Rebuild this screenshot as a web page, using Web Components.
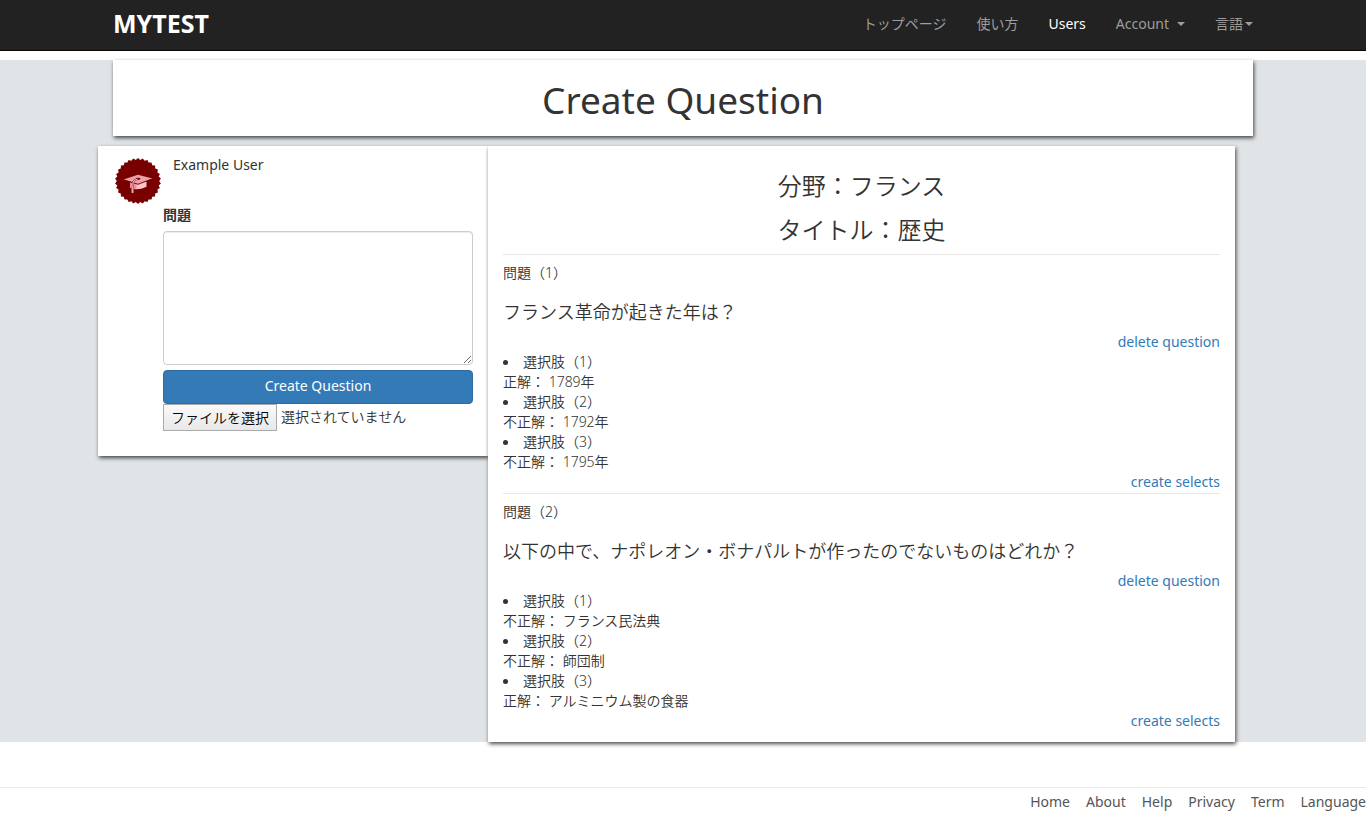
<!DOCTYPE html>
<html lang="ja">
<head>
<meta charset="utf-8">
<meta name="viewport" content="width=device-width, initial-scale=1">
<title>Create Question | MYTEST</title>
<style>
  body {
    margin: 0;
    background: #fff;
    color: #333;
    font: 350 14px/20px "Noto Sans", "Noto Sans CJK JP", sans-serif;
    --link: #337ab7;
    --rule: #e7e7e7;
    --shadow: 1px 2px 4px rgba(0, 0, 0, .7);
    --container: 1140px;
  }
</style>
</head>
<body>
<site-header>
  <nav-link href="#">トップページ</nav-link>
  <nav-link href="#">使い方</nav-link>
  <nav-link href="#" active>Users</nav-link>
  <nav-link href="#" caret="spaced">Account</nav-link>
  <nav-link href="#" caret>言語</nav-link>
</site-header>
<page-main>
  <page-title slot="title">Create Question</page-title>
  <question-form slot="side" user="Example User"></question-form>
  <question-panel category="フランス" heading="歴史">
    <question-item number="1" text="フランス革命が起きた年は？">
      <choice-item number="1" correct>1789年</choice-item>
      <choice-item number="2">1792年</choice-item>
      <choice-item number="3">1795年</choice-item>
    </question-item>
    <question-item number="2" text="以下の中で、ナポレオン・ボナパルトが作ったのでないものはどれか？">
      <choice-item number="1">フランス民法典</choice-item>
      <choice-item number="2">師団制</choice-item>
      <choice-item number="3" correct>アルミニウム製の食器</choice-item>
    </question-item>
  </question-panel>
</page-main>
<site-footer></site-footer>

<script>
class BaseElement extends HTMLElement {
  connectedCallback() {
    if (this.shadowRoot) return;
    this.attachShadow({ mode: "open" }).innerHTML = this.render();
  }
  attr(name) { return this.getAttribute(name) || ""; }
}

customElements.define("site-header", class extends BaseElement {
  render() {
    return `<style>
      :host { display: block; background: #222; border-bottom: 1px solid #080808; }
      .bar { max-width: var(--container); min-height: 50px; margin: 0 auto; padding: 0 15px; display: flex; justify-content: space-between; }
      .brand { color: #fff; font-size: 25px; line-height: 46px; font-weight: 700; text-decoration: none; }
      nav { display: flex; margin-right: -15px; }
    </style>
    <header class="bar"><a class="brand" href="#">MYTEST</a><nav><slot></slot></nav></header>`;
  }
});

customElements.define("nav-link", class extends BaseElement {
  render() {
    const caret = this.hasAttribute("caret") ? `<span class="caret ${this.attr("caret")}"></span>` : "";
    return `<style>
      :host { display: block; font-weight: 400; }
      a { display: flex; align-items: center; padding: 14px 15px 16px; color: #9d9d9d; text-decoration: none; white-space: nowrap; }
      :host([active]) a { color: #fff; }
      .caret { margin-left: 2px; border-top: 4px solid; border-left: 4px solid transparent; border-right: 4px solid transparent; }
      .spaced { margin-left: 8px; }
    </style>
    <a href="${this.attr("href")}"><slot></slot>${caret}</a>`;
  }
});

customElements.define("page-main", class extends BaseElement {
  render() {
    return `<style>
      :host { display: block; margin-top: 9px; background: #e0e4e7; }
      main { max-width: var(--container); margin: 0 auto; padding: 0 15px; }
      .row { display: grid; grid-template-columns: 390px minmax(0, 1fr); align-items: start; margin: 10px 18px 0 -15px; }
    </style>
    <main>
      <slot name="title"></slot>
      <div class="row"><slot name="side"></slot><slot></slot></div>
    </main>`;
  }
});

customElements.define("page-title", class extends BaseElement {
  render() {
    return `<style>
      :host { display: block; background: #fff; box-shadow: var(--shadow); }
      h1 { margin: 0; padding: 20px 0 16px; font-size: 37px; line-height: 40px; font-weight: 400; text-align: center; }
    </style><h1><slot></slot></h1>`;
  }
});

customElements.define("user-badge", class extends BaseElement {
  render() {
    const teeth = 30, points = [];
    for (let i = 0; i < teeth * 2; i++) {
      const r = i % 2 ? 21.2 : 23, a = Math.PI * i / teeth;
      points.push((23 + r * Math.sin(a)).toFixed(1) + "," + (23 - r * Math.cos(a)).toFixed(1));
    }
    return `<style>:host, svg { display: block; width: 46px; height: 46px; }</style>
    <svg viewBox="0 0 46 46" aria-hidden="true">
      <polygon points="${points.join(" ")}" fill="#780000"/>
      <path d="M15 24.500v5.200q7 3.600 16.500-1v-5.500l-9 2.600z" fill="#ffc4c8"/>
      <path d="M15 24.500v5.200q3 1.400 6.500 1.500v-5z" fill="#ef8f96"/>
      <path d="M8.500 21.500l14.500-4.700 14.500 3.700-14.500 5.500z" fill="#e9a3a8"/>
      <path d="M8.500 21.800l14.500 4.500 14.500-5.500" fill="none" stroke="#780000" stroke-width=".9"/>
      <ellipse cx="23" cy="20.800" rx="2.400" ry="1.100" fill="#780000"/>
      <path d="M22.500 21q-4.500 1.500-4.500 4l-.5 9" fill="none" stroke="#780000" stroke-width="1.800"/>
      <path d="M22.500 21q-4.500 1.500-4.500 4l-.5 9" fill="none" stroke="#ffc4c8" stroke-width="1.100"/>
      <path d="M16.500 31h2v4h-2z" fill="#e9a3a8"/>
    </svg>`;
  }
});

customElements.define("question-form", class extends BaseElement {
  render() {
    return `<style>
      :host { display: block; background: #fff; box-shadow: var(--shadow); }
      .user { display: flex; gap: 12px; padding: 12px 17px 0; line-height: 14px; }
      .user a { color: inherit; font-weight: 400; text-decoration: none; }
      form { padding: 0 15px 25px 65px; }
      label.title { display: block; font-weight: 700; line-height: 22px; margin-bottom: 5px; }
      textarea { display: block; box-sizing: border-box; width: 100%; height: 134px; padding: 6px 12px; border: 1px solid #ccc; border-radius: 4px; box-shadow: inset 0 1px 1px rgba(0, 0, 0, .075); font: inherit; color: #555; resize: both; }
      button { display: block; width: 100%; height: 34px; margin-top: 5px; padding: 0 0 2px; border: 1px solid #2e6da4; border-radius: 4px; background: var(--link); color: #fff; font: inherit; font-weight: 400; }
      .file { display: flex; width: max-content; gap: 4px; line-height: 25px; }
      .file input { position: absolute; width: 1px; height: 1px; margin: 0; opacity: 0; }
      .pick { box-sizing: border-box; height: 27px; padding: 0 7px; border: 1px solid #aaa; background: linear-gradient(#fafafa, #e8e8e8); color: #000; }
    </style>
    <div class="user"><user-badge></user-badge><a href="#">${this.attr("user")}</a></div>
    <form>
      <label class="title" for="question">問題</label>
      <textarea id="question" name="question"></textarea>
      <button type="button">Create Question</button>
      <label class="file" for="picture"><input type="file" id="picture"><span class="pick">ファイルを選択</span><span>選択されていません</span></label>
    </form>`;
  }
});

customElements.define("question-panel", class extends BaseElement {
  render() {
    return `<style>
      :host { display: block; padding: 18px 15px 10px; background: #fff; box-shadow: var(--shadow); }
      h3 { margin: 0; font-size: 24px; line-height: 44px; font-weight: inherit; text-align: center; }
      .list { margin-top: 2px; }
    </style>
    <h3>分野：${this.attr("category")}</h3>
    <h3>タイトル：${this.attr("heading")}</h3>
    <div class="list"><slot></slot></div>`;
  }
});

customElements.define("question-item", class extends BaseElement {
  render() {
    return `<style>
      :host { display: block; padding: 8px 0 1px; border-top: 1px solid var(--rule); }
      p { margin: 0; }
      h4 { margin: 19px 0 10px; font-size: 18px; line-height: 20px; font-weight: inherit; }
      .action { text-align: right; }
      a { color: var(--link); font-weight: 400; text-decoration: none; }
    </style>
    <p>問題（${this.attr("number")}）</p>
    <h4>${this.attr("text")}</h4>
    <div class="action"><a href="#">delete question</a></div>
    <div role="list"><slot></slot></div>
    <div class="action"><a href="#">create selects</a></div>`;
  }
});

customElements.define("choice-item", class extends BaseElement {
  render() {
    const verdict = this.hasAttribute("correct") ? "正解" : "不正解";
    return `<style>
      :host { display: block; }
      .name { display: flex; align-items: center; gap: 15px; }
      .name::before { content: ""; width: 5px; height: 5px; border-radius: 50%; background: #333; }
    </style>
    <div role="listitem"><div class="name">選択肢（${this.attr("number")}）</div><div>${verdict}： <slot></slot></div></div>`;
  }
});

customElements.define("site-footer", class extends BaseElement {
  render() {
    const links = ["Home", "About", "Help", "Privacy", "Term", "Language"];
    return `<style>
      :host { display: block; margin-top: 45px; border-top: 1px solid #eaeaea; }
      nav { display: flex; justify-content: flex-end; gap: 16px; padding: 4px 0 20px; }
      a { color: #555; font-weight: 400; text-decoration: none; }
    </style>
    <footer><nav>${links.map(t => `<a href="#">${t}</a>`).join("")}</nav></footer>`;
  }
});
</script>
</body>
</html>
